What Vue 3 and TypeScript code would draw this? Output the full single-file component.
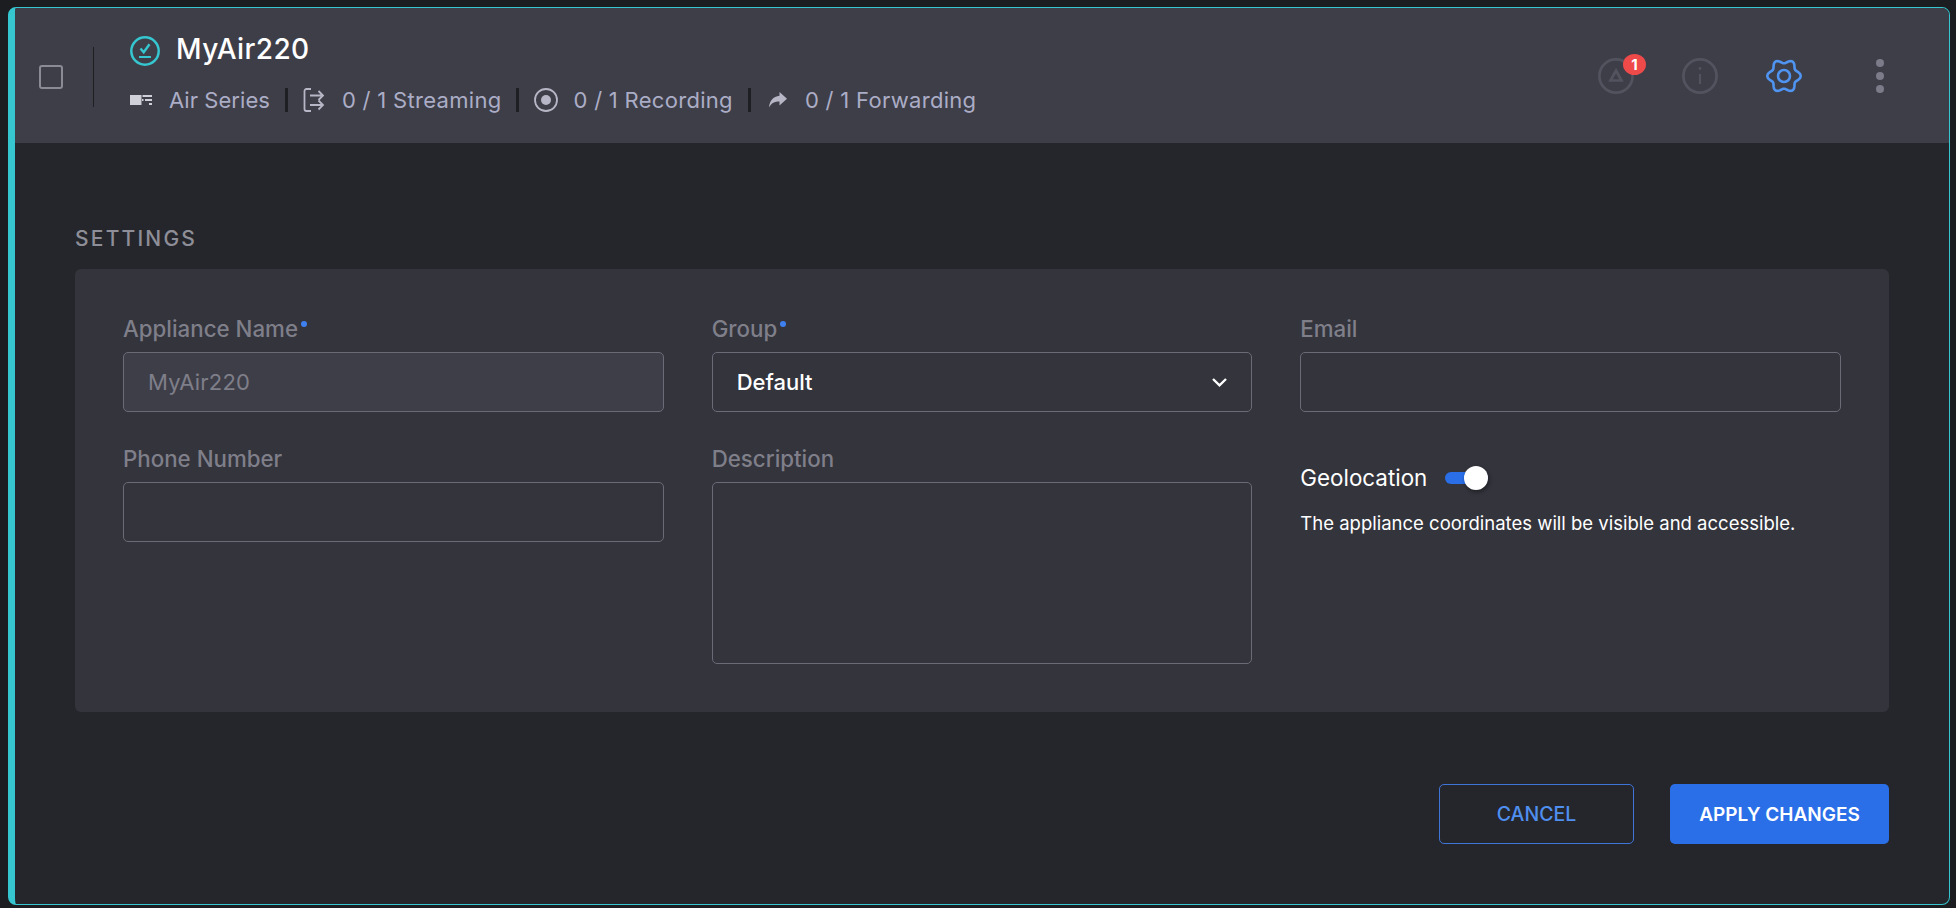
<script setup lang="ts">
const stats = [
  { key: 'stream', text: '0 / 1 Streaming' },
  { key: 'record', text: '0 / 1 Recording' },
  { key: 'forward', text: '0 / 1 Forwarding' },
]

// Six-lobed gear outline: radius swings around a mean, sampled every 3 degrees.
const gearPath = Array.from({ length: 120 }, (_, i) => {
  const a = (i * 3 * Math.PI) / 180
  const r = 14.7 + 2 * Math.cos(6 * a)
  return `${i ? 'L' : 'M'}${(18 + r * Math.cos(a)).toFixed(2)} ${(18 + r * Math.sin(a)).toFixed(2)}`
}).join('') + 'Z'
</script>

<template>
  <div class="frame">
    <header class="head">
      <span class="check"></span>
      <span class="vline"></span>
      <div class="info">
        <div class="title-row">
          <svg class="status" viewBox="0 0 30 30" fill="none" stroke="#35c6cf">
            <circle cx="15" cy="15" r="13.700" stroke-width="2.500" />
            <path d="M10.500 12.500l3.200 3.800 5.800-8" stroke-width="2.400" />
            <path d="M9 21h12" stroke-width="2.200" />
          </svg>
          <h1>MyAir220</h1>
        </div>
        <div class="meta">
          <span class="stat air">
            <svg class="i-air" viewBox="0 0 22 10" fill="#cfcfd8">
              <path d="M0 0h11.500v10H0z" />
              <path d="M12 4h1.500v2H12zM12.500 0H22v2h-9.500zM15 4h7v2h-7zM19 8h3v2h-3z" />
            </svg>
            Air Series
          </span>
          <template v-for="s in stats" :key="s.key">
            <span class="sep"></span>
            <span class="stat" :class="s.key">
              <svg v-if="s.key === 'stream'" class="i-stream" viewBox="0 0 22 24" fill="none" stroke="#b6b6c6" stroke-width="1.800">
                <path d="M8 1H3.500A2 2 0 0 0 1.500 3v18a2 2 0 0 0 2 2H8" />
                <path d="M7 7.500h13M15.500 3l4.500 4.500-4.500 4.500" />
                <path d="M7 17h13M15.500 12.500l4.500 4.500-4.500 4.500" />
              </svg>
              <svg v-else-if="s.key === 'record'" class="i-rec" viewBox="0 0 24 24" fill="none">
                <circle cx="12" cy="12" r="11" stroke="#b6b6c6" stroke-width="1.800" />
                <circle cx="12" cy="12" r="5" fill="#b6b6c6" />
              </svg>
              <svg v-else class="i-fwd" viewBox="0 0 18 16" fill="#b6b6c6">
                <path d="M10.500 0L18 6.800l-7.500 6.800V9.500C5.500 9.500 2.500 11 0 15.500 0.500 9 4 4.500 10.500 3.800z" />
              </svg>
              {{ s.text }}
            </span>
          </template>
        </div>
      </div>
      <div class="actions">
        <span class="act alert">
          <svg viewBox="0 0 36 36" fill="none" stroke="#53535f" stroke-width="2.700">
            <circle cx="18" cy="18" r="16.600" />
            <path d="M18 12.500l5.500 10h-11z" />
          </svg>
          <b class="badge">1</b>
        </span>
        <span class="act">
          <svg viewBox="0 0 36 36" fill="none" stroke="#53535f" stroke-width="2.700">
            <circle cx="18" cy="18" r="16.600" />
            <path d="M18 16v10" stroke-width="2.200" />
            <circle cx="18" cy="10.500" r="1.400" fill="#53535f" stroke="none" />
          </svg>
        </span>
        <span class="act">
          <svg viewBox="0 0 36 36" fill="none" stroke="#4f94f0" stroke-width="2.600">
            <path :d="gearPath" stroke-linejoin="round" />
            <circle cx="18" cy="18" r="6" />
          </svg>
        </span>
        <span class="dots"><i></i><i></i><i></i></span>
      </div>
    </header>

    <main class="body">
      <h2>SETTINGS</h2>
      <section class="card">
        <div class="field">
          <label>Appliance Name<em></em></label>
          <div class="input disabled">MyAir220</div>
        </div>
        <div class="field">
          <label>Group<em></em></label>
          <div class="input select">
            Default
            <svg viewBox="0 0 15 9" fill="none" stroke="#fff" stroke-width="2.400"><path d="M1 1l6.500 6.300L14 1" /></svg>
          </div>
        </div>
        <div class="field">
          <label>Email</label>
          <div class="input"></div>
        </div>
        <div class="field">
          <label>Phone Number</label>
          <div class="input"></div>
        </div>
        <div class="field">
          <label>Description</label>
          <div class="input area"></div>
        </div>
        <div class="geo">
          <div class="geo-row">
            <span>Geolocation</span>
            <span class="toggle"><i></i></span>
          </div>
          <p>The appliance coordinates will be visible and accessible.</p>
        </div>
      </section>
      <div class="buttons">
        <button class="btn ghost">CANCEL</button>
        <button class="btn solid">APPLY CHANGES</button>
      </div>
    </main>
  </div>
</template>

<style>
html, body { margin: 0; background: #1c1d20; }
</style>

<style scoped>
* { box-sizing: border-box; }
.frame {
  margin: 7px 6px 0 8px;
  height: 898px;
  border: 1px solid #35c6cf;
  border-left-width: 7px;
  border-radius: 8px;
  background: #25262b;
  overflow: hidden;
  font-family: Inter, "Liberation Sans", sans-serif;
  color: #fff;
}
.head {
  height: 135px;
  background: #3e3e48;
  display: flex;
  align-items: center;
  padding-left: 24px;
}
.check {
  width: 24px;
  height: 24px;
  border: 2px solid #8b8b95;
  border-radius: 3px;
  margin-top: 2px;
}
.vline {
  width: 1px;
  height: 60px;
  background: #1e1f23;
  margin: 2px 36px 0 30px;
}
.info { display: flex; flex-direction: column; gap: 21px; margin-top: -2px; }
.title-row { display: flex; align-items: center; gap: 16px; }
.status { width: 30px; height: 30px; }
h1 { margin: -4px 0 0; font-size: 28px; line-height: 30px; font-weight: 500; letter-spacing: .4px; }
.meta { display: flex; align-items: center; font-size: 22px; letter-spacing: .3px; color: #abadc6; }
.stat { display: flex; align-items: center; line-height: 26px; }
.stat.air { letter-spacing: .05px; }
.sep { width: 3px; height: 24px; background: #1e1f23; margin: 0 15px; }
.i-air { width: 22px; height: 10px; margin-right: 17px; }
.i-stream { width: 22px; height: 24px; margin-right: 17px; }
.i-rec { width: 24px; height: 24px; margin-right: 15px; }
.i-fwd { width: 18px; height: 16px; margin: 0 18px 0 3px; }
.actions { margin-left: auto; display: flex; align-items: center; margin-right: 65px; }
.act { position: relative; width: 36px; height: 36px; margin-right: 48px; }
.act svg { display: block; width: 36px; height: 36px; }
.badge {
  position: absolute;
  right: -12px;
  top: -4px;
  width: 23px;
  height: 21px;
  border-radius: 50%;
  background: #ee4a4a;
  font-size: 15px;
  line-height: 21px;
  font-weight: 700;
  text-align: center;
}
.dots { display: flex; flex-direction: column; gap: 5px; margin-left: 26px; }
.dots i { width: 8px; height: 8px; border-radius: 50%; background: #7c7b8a; }
.body { padding: 84px 60px 0; }
h2 {
  margin: 0 0 18px;
  font-size: 21px;
  line-height: 24px;
  font-weight: 500;
  letter-spacing: 2.2px;
  color: #8e8e98;
}
.card {
  background: #33343c;
  border-radius: 6px;
  padding: 48px 48px 0;
  height: 443px;
  display: grid;
  grid-template-columns: repeat(3, 1fr);
  column-gap: 48px;
  grid-template-rows: 95px auto;
  row-gap: 35px;
  align-content: start;
}
.field { display: flex; flex-direction: column; }
label {
  font-size: 22.300px;
  line-height: 24px;
  font-weight: 500;
  color: #7f7f8a;
  margin-bottom: 11px;
  display: flex;
}
label em {
  width: 6px;
  height: 6px;
  border-radius: 50%;
  background: #3f80f0;
  margin: 4px 0 0 3px;
}
.input {
  height: 60px;
  border: 1px solid #6b6b78;
  border-radius: 5px;
  display: flex;
  align-items: center;
  padding: 0 24px;
  font-size: 22px;
}
.disabled { background: #3e3e48; color: #7f7f8a; letter-spacing: .2px; }
.select { justify-content: space-between; font-weight: 500; }
.select svg { width: 15px; height: 9px; }
.area { height: 182px; }
.geo { padding-top: 18px; }
.geo-row { display: flex; align-items: center; gap: 18px; font-size: 22.400px; line-height: 26px; }
.toggle { position: relative; width: 43px; height: 12px; border-radius: 6px; background: #2a6ee8; }
.toggle i {
  position: absolute;
  right: 0;
  top: -6px;
  width: 24px;
  height: 24px;
  border-radius: 50%;
  background: #fff;
  box-shadow: 1px 2px 4px rgba(0, 0, 0, .4);
}
.geo p { margin: 20px 0 0; font-size: 18.500px; line-height: 24px; }
.buttons { display: flex; justify-content: flex-end; gap: 36px; margin-top: 72px; }
.btn {
  height: 60px;
  border-radius: 5px;
  font: 500 19.500px Inter, "Liberation Sans", sans-serif;
}
.ghost { width: 195px; background: transparent; border: 1px solid #3f74d8; color: #4f8ff0; }
.solid { width: 219px; background: #2a6fe8; border: 0; color: #fff; font-size: 19px; font-weight: 600; }
</style>
